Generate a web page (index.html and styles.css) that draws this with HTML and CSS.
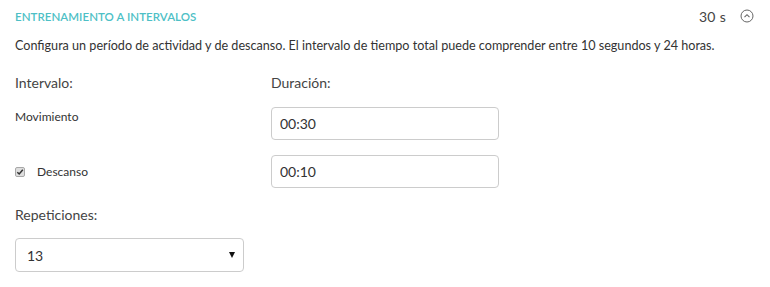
FILE: index.html
```html
<!DOCTYPE html>
<html lang="es">
<head>
<meta charset="utf-8">
<link rel="stylesheet" href="styles.css">
</head>
<body>
<div class="panel">
  <div class="header">
    <div class="title">ENTRENAMIENTO A INTERVALOS</div>
    <div class="summary">
      <span class="total">30 s</span>
      <svg class="chev" width="14" height="14" viewBox="0 0 14 14">
        <circle cx="7" cy="7" r="6" fill="none" stroke="#666" stroke-width="1"/>
        <path d="M4.5 8.2 L7 5.7 L9.5 8.2" fill="none" stroke="#666" stroke-width="1.1"/>
      </svg>
    </div>
  </div>
  <p class="desc">Configura un período de actividad y de descanso. El intervalo de tiempo total puede comprender entre 10 segundos y 24 horas.</p>
  <div class="grid">
    <div class="col-label">Intervalo:</div>
    <div class="col-label">Duración:</div>
    <div class="row-label top">Movimiento</div>
    <div><input class="field" type="text" value="00:30"></div>
    <label class="row-label check">
      <svg class="box" width="10" height="10" viewBox="0 0 10 10">
        <rect x="0.5" y="0.5" width="9" height="9" rx="1.5" fill="#dedede" stroke="#a8a8a8"/>
        <path d="M2.3 5.2 L4.2 7 L7.8 2.8" fill="none" stroke="#333" stroke-width="1.5"/>
      </svg>
      <span>Descanso</span>
    </label>
    <div><input class="field" type="text" value="00:10"></div>
  </div>
  <div class="col-label reps">Repeticiones:</div>
  <div class="select">
    <span>13</span>
    <span class="arrow"></span>
  </div>
</div>
</body>
</html>
```

FILE: styles.css
```css
html, body {
  margin: 0;
  padding: 0;
  background: #fff;
}
body {
  font-family: Lato, "Open Sans", Arial, sans-serif;
  color: #333;
}
.panel {
  padding: 0 15px;
}
.header {
  display: flex;
  justify-content: space-between;
  align-items: center;
  height: 32px;
}
.title {
  color: #4dbfc6;
  font-size: 11.5px;
  font-weight: 600;
  letter-spacing: 0.05px;
}
.summary {
  display: flex;
  align-items: center;
  gap: 14px;
  color: #444;
  font-size: 14px;
  padding-right: 1px;
}
.total {
  letter-spacing: 0.3px;
}
.chev {
  display: block;
}
.desc {
  margin: 6px 0 0;
  font-size: 12.6px;
  line-height: 16px;
  color: #333;
}
.grid {
  display: grid;
  grid-template-columns: 256px 228px;
  row-gap: 15px;
  margin-top: 20px;
}
.col-label {
  font-size: 14px;
  color: #444;
  line-height: 18px;
}
.row-label {
  font-size: 12px;
  color: #333;
}
.row-label.top {
  padding-top: 2px;
}
.check {
  display: flex;
  align-items: center;
}
.box {
  display: block;
  margin-right: 12px;
}
.field {
  box-sizing: border-box;
  width: 228px;
  height: 33px;
  border: 1px solid #ccc;
  border-radius: 4px;
  padding: 0 8px;
  font-family: inherit;
  font-size: 14px;
  color: #333;
  display: block;
}
.reps {
  margin-top: 18px;
}
.select {
  box-sizing: border-box;
  width: 229px;
  height: 34px;
  margin-top: 14px;
  border: 1px solid #ccc;
  border-radius: 4px;
  padding: 0 8px 0 11px;
  display: flex;
  align-items: center;
  justify-content: space-between;
  font-size: 14px;
  color: #333;
}
.arrow {
  width: 0;
  height: 0;
  border-left: 3.5px solid transparent;
  border-right: 3.5px solid transparent;
  border-top: 6px solid #111;
}
```
